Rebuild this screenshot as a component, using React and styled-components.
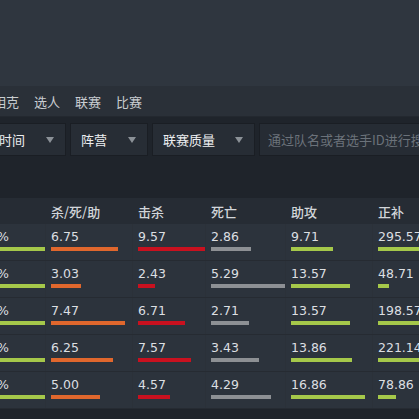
import React from "react";
import styled, { createGlobalStyle } from "styled-components";

const GlobalStyle = createGlobalStyle`
  html, body {
    margin: 0;
    padding: 0;
    background: #1f242b;
    overflow: hidden;
  }
  body {
    font-family: "DejaVu Sans", "Noto Sans CJK SC", sans-serif;
  }
`;

const Page = styled.div`
  width: 540px;
  margin-left: -60px;
`;

const Banner = styled.div`
  height: 86px;
  background: #2f363f;
`;

const Nav = styled.div`
  height: 30px;
  background: #2a3038;
  display: flex;
  align-items: center;
  gap: 15px;
  padding-left: 53px;
  border-bottom: 1px solid #23282f;
`;

const NavItem = styled.span`
  font-family: "Noto Sans CJK SC", sans-serif;
  font-size: 13px;
  color: #c9cdd1;
`;

const FilterArea = styled.div`
  height: 81px;
  background: #1f242b;
  padding-top: 6px;
  box-sizing: border-box;
`;

const FilterRow = styled.div`
  display: flex;
  gap: 4px;
  padding-left: 20px;
`;

const Select = styled.div`
  width: ${(p) => p.$w}px;
  height: 33px;
  box-sizing: border-box;
  background: #272d35;
  border: 1px solid #1a1e24;
  display: flex;
  align-items: center;
  justify-content: space-between;
  padding: 0 11px 0 ${(p) => p.$pad}px;
  font-family: "Noto Sans CJK SC", sans-serif;
  font-size: 13px;
  color: #eceef0;
`;

const Arrow = styled.span`
  width: 0;
  height: 0;
  border-left: 4px solid transparent;
  border-right: 4px solid transparent;
  border-top: 6px solid #8b9197;
`;

const Search = styled.div`
  flex: 1;
  height: 33px;
  box-sizing: border-box;
  background: #262c34;
  border: 1px solid #1a1e24;
  display: flex;
  align-items: center;
  padding-left: 8px;
  font-family: "Noto Sans CJK SC", sans-serif;
  font-size: 13px;
  color: #6b727a;
  white-space: nowrap;
  overflow: hidden;
`;

const Table = styled.div`
  display: flex;
  flex-direction: column;
`;

const grid = `
  display: grid;
  grid-template-columns: 106px 87px 73px 80px 87px 107px;
`;

const HeadRow = styled.div`
  ${grid}
  height: 26px;
  align-items: center;
  background: #262c34;
`;

const HeadCell = styled.div`
  padding-left: 5px;
  font-family: "Noto Sans CJK SC", sans-serif;
  font-size: 13px;
  font-weight: 500;
  color: #d2d6da;
`;

const Row = styled.div`
  ${grid}
  height: 37px;
  box-sizing: border-box;
  background: #2c333c;
  border-bottom: 1px solid #262b32;
`;

const Cell = styled.div`
  padding: 5px 0 0 5px;
  display: flex;
  flex-direction: column;
  gap: 3px;
  border-right: 1px solid #2b3139;
`;

const Value = styled.span`
  font-size: 12.5px;
  line-height: 15px;
  color: #dcdfe2;
  text-align: ${(p) => (p.$right ? "right" : "left")};
  padding-right: ${(p) => (p.$right ? "36px" : "0")};
`;

const Bar = styled.div`
  height: 4px;
  background: ${(p) => p.$color};
`;

const Bottom = styled.div`
  height: 12px;
  background: #1f242b;
`;

const GREEN = "#a5c84a";
const ORANGE = "#e0672d";
const RED = "#c9111f";
const GRAY = "#8d9094";

const rows = [
  { rate: "57.1%", kda: ["6.75", 67], k: ["9.57", 67], d: ["2.86", 40], a: ["9.71", 42], cs: ["295.57", 60] },
  { rate: "42.8%", kda: ["3.03", 30], k: ["2.43", 17], d: ["5.29", 74], a: ["13.57", 59], cs: ["48.71", 11] },
  { rate: "71.4%", kda: ["7.47", 74], k: ["6.71", 47], d: ["2.71", 38], a: ["13.57", 59], cs: ["198.57", 60] },
  { rate: "57.1%", kda: ["6.25", 62], k: ["7.57", 53], d: ["3.43", 48], a: ["13.86", 61], cs: ["221.14", 60] },
  { rate: "42.8%", kda: ["5.00", 49], k: ["4.57", 32], d: ["4.29", 60], a: ["16.86", 74], cs: ["78.86", 18] },
];

const Stat = ({ value, width, color }) => (
  <Cell>
    <Value>{value}</Value>
    <Bar $color={color} style={{ width }} />
  </Cell>
);

export default function App() {
  return (
    <>
      <GlobalStyle />
      <Page>
        <Banner />
        <Nav>
          <NavItem>相克</NavItem>
          <NavItem>选人</NavItem>
          <NavItem>联赛</NavItem>
          <NavItem>比赛</NavItem>
        </Nav>
        <FilterArea>
          <FilterRow>
            <Select $w={106} $pad={12}>
              比赛时间
              <Arrow />
            </Select>
            <Select $w={78} $pad={10}>
              阵营
              <Arrow />
            </Select>
            <Select $w={103} $pad={10}>
              联赛质量
              <Arrow />
            </Select>
            <Search>通过队名或者选手ID进行搜索</Search>
          </FilterRow>
        </FilterArea>
        <Table>
          <HeadRow>
            <HeadCell>胜率</HeadCell>
            <HeadCell>杀/死/助</HeadCell>
            <HeadCell>击杀</HeadCell>
            <HeadCell>死亡</HeadCell>
            <HeadCell>助攻</HeadCell>
            <HeadCell>正补</HeadCell>
          </HeadRow>
          {rows.map((r, i) => (
            <Row key={i}>
              <Cell>
                <Value $right>{r.rate}</Value>
                <Bar $color={GREEN} style={{ width: 100 }} />
              </Cell>
              <Stat value={r.kda[0]} width={r.kda[1]} color={ORANGE} />
              <Stat value={r.k[0]} width={r.k[1]} color={RED} />
              <Stat value={r.d[0]} width={r.d[1]} color={GRAY} />
              <Stat value={r.a[0]} width={r.a[1]} color={GREEN} />
              <Stat value={r.cs[0]} width={r.cs[1]} color={GREEN} />
            </Row>
          ))}
        </Table>
        <Bottom />
      </Page>
    </>
  );
}
